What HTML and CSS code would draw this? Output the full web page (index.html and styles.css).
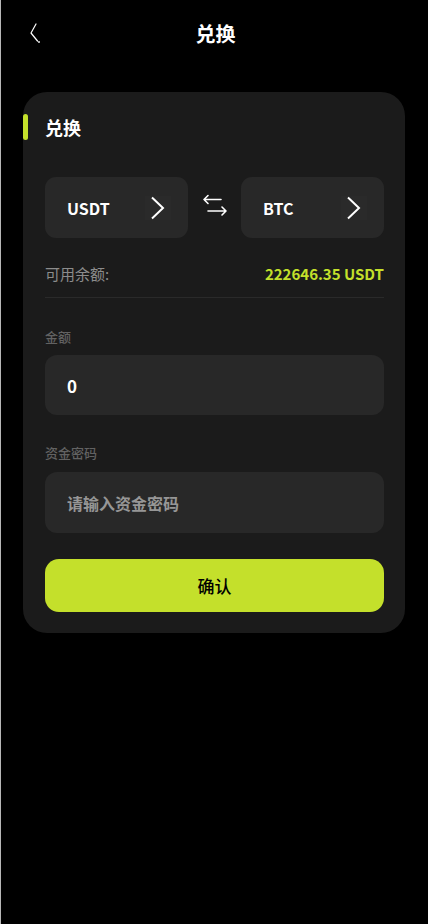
FILE: index.html
```html
<!DOCTYPE html>
<html lang="zh-CN">
<head>
<meta charset="utf-8">
<meta name="viewport" content="width=device-width, initial-scale=1">
<title>兑换</title>
<link rel="stylesheet" href="styles.css">
</head>
<body>
<header class="topbar">
  <button class="back" aria-label="返回">
    <svg width="14" height="22" viewBox="0 0 14 22"><path d="M6 2 L1 11 L7.5 19" fill="none" stroke="#fff" stroke-width="1.2" stroke-linecap="round" stroke-linejoin="round"/><circle cx="9" cy="20" r="0.9" fill="#fff"/></svg>
  </button>
  <h1 class="topbar-title">兑换</h1>
</header>

<main class="card">
  <div class="card-title"><span class="accent"></span><span>兑换</span></div>

  <div class="pair">
    <div class="coin">
      <span class="coin-name">USDT</span>
      <span class="coin-arrow"><svg width="16" height="24" viewBox="0 0 16 24"><path d="M2 1.5 L13 12 L2 22.5" fill="none" stroke="#fff" stroke-width="2" stroke-linejoin="miter"/></svg></span>
    </div>
    <div class="swap">
      <svg width="26" height="22" viewBox="0 0 26 22"><path d="M19 5.5 H2 M6 1.5 L2 5.5 L6 9.5" fill="none" stroke="#fff" stroke-width="1.6" stroke-linecap="round" stroke-linejoin="round"/><path d="M6 17 H24 M20 13 L24 17 L20 21" fill="none" stroke="#fff" stroke-width="1.6" stroke-linecap="round" stroke-linejoin="round"/></svg>
    </div>
    <div class="coin">
      <span class="coin-name">BTC</span>
      <span class="coin-arrow"><svg width="16" height="24" viewBox="0 0 16 24"><path d="M2 1.5 L13 12 L2 22.5" fill="none" stroke="#fff" stroke-width="2" stroke-linejoin="miter"/></svg></span>
    </div>
  </div>

  <div class="balance">
    <span class="balance-label">可用余额:</span>
    <span class="balance-value">222646.35 USDT</span>
  </div>

  <label class="field-label">金额</label>
  <div class="field"><span class="field-value">0</span></div>

  <label class="field-label field-label-2">资金密码</label>
  <div class="field field-2"><span class="placeholder">请输入资金密码</span></div>

  <button class="confirm">确认</button>
</main>
</body>
</html>
```

FILE: styles.css
```css
* { box-sizing: border-box; }
html, body { margin: 0; padding: 0; }
body {
  background: #000;
  min-height: 924px;
  border-left: 1px solid #b8b8b8;
  font-family: "Noto Sans CJK SC", "Noto Sans", sans-serif;
  color: #fff;
}
.topbar {
  height: 68px;
  display: flex;
  align-items: center;
  justify-content: center;
  position: relative;
}
.back {
  position: absolute;
  left: 29px;
  top: 22px;
  background: none;
  border: 0;
  padding: 0;
  width: 14px;
  height: 22px;
}
.back svg { display: block; }
.topbar-title {
  margin: 0;
  font-size: 20px;
  font-weight: 700;
  line-height: 28px;
  padding-left: 2px;
}
.card {
  margin: 24px 23px 0 22px;
  background: #1b1b1b;
  border-radius: 24px;
  padding: 22px 21px 21px 0;
  display: flex;
  flex-direction: column;
}
.card-title {
  display: flex;
  align-items: center;
  height: 26px;
  font-size: 18px;
  font-weight: 700;
  gap: 17px;
}
.accent {
  width: 5px;
  height: 26px;
  background: #c4e02b;
  border-radius: 3px;
}
.pair, .balance, .field-label, .field, .confirm { margin-left: 22px; }
.pair {
  margin-top: 37px;
  display: flex;
  align-items: center;
  justify-content: space-between;
}
.coin {
  width: 143px;
  height: 61px;
  background: #282828;
  border-radius: 11px;
  display: flex;
  align-items: center;
  justify-content: space-between;
  padding: 0 17px 0 22px;
}
.coin-name {
  font-size: 16px;
  font-weight: 700;
}
.coin-arrow {
  width: 26px;
  height: 24px;
  display: flex;
  align-items: center;
  justify-content: center;
  background: #2a2a2a;
}
.coin-arrow svg { display: block; }
.swap {
  width: 26px;
  height: 22px;
  margin-top: -6px;
}
.swap svg { display: block; }
.balance {
  margin-top: 25px;
  padding-bottom: 12px;
  border-bottom: 1px solid #2a2a2a;
  display: flex;
  justify-content: space-between;
  align-items: center;
  line-height: 22px;
  font-size: 15px;
}
.balance-label { color: #8c8c8c; }
.balance-value {
  color: #c4e02b;
  font-weight: 700;
}
.field-label {
  display: block;
  margin-top: 30px;
  font-size: 13px;
  line-height: 18px;
  font-weight: 500;
  color: #626262;
}
.field-label-2 { margin-top: 29px; }
.field {
  margin-top: 9px;
  height: 60px;
  background: #282828;
  border-radius: 12px;
  display: flex;
  align-items: center;
  padding-left: 22px;
}
.field-2 { height: 61px; margin-top: 10px; }
.field-value {
  font-size: 17px;
  font-weight: 700;
}
.placeholder {
  font-size: 16px;
  font-weight: 700;
  color: #969696;
}
.confirm {
  margin-top: 26px;
  height: 53px;
  border: 0;
  border-radius: 14px;
  background: #c4e02b;
  color: #000;
  font-family: inherit;
  font-size: 17px;
  font-weight: 500;
}
```
